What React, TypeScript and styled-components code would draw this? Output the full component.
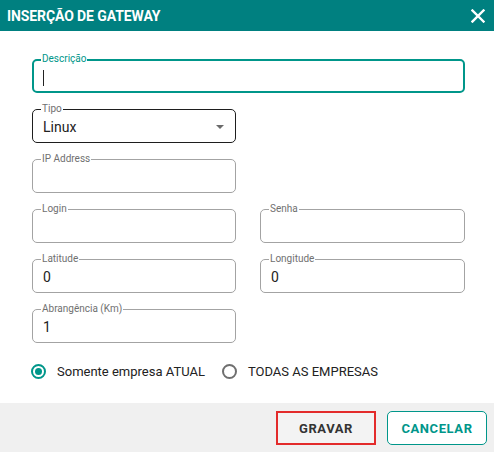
import React from "react";
import styled, { createGlobalStyle } from "styled-components";

const Global = createGlobalStyle`
  html, body { margin: 0; padding: 0; background: #fff; }
  body { font-family: Roboto, "Liberation Sans", Arial, sans-serif; }
  * { box-sizing: border-box; }
`;

const Dialog = styled.div`
  width: 494px;
  height: 452px;
  display: flex;
  flex-direction: column;
  background: #fff;
`;

const Header = styled.div`
  height: 31px;
  background: #008080;
  display: flex;
  align-items: center;
  justify-content: space-between;
  padding: 0 9px 0 7px;
`;

const Title = styled.h1`
  margin: 0;
  color: #fff;
  font-size: 14px;
  font-weight: 700;
  letter-spacing: -0.1px;
`;

const CloseButton = styled.button`
  border: 0;
  background: none;
  padding: 0;
  width: 14px;
  height: 14px;
  display: flex;
  cursor: pointer;
`;

const Body = styled.div`
  flex: 1;
  padding: 28px 29px 0 32px;
`;

const Grid = styled.div`
  display: grid;
  grid-template-columns: 204px 205px;
  column-gap: 24px;
  row-gap: 16px;
`;

const Field = styled.div<{ $wide?: boolean; $col: number }>`
  position: relative;
  height: 34px;
  grid-column: ${(p) => (p.$wide ? "1 / span 2" : `${p.$col}`)};
`;

const Box = styled.div<{ $variant?: "focus" | "active" }>`
  height: 100%;
  border-radius: 5px;
  border: ${(p) =>
    p.$variant === "focus"
      ? "2px solid #00968a"
      : p.$variant === "active"
      ? "1px solid #1e1e1e"
      : "1px solid #a3a3a3"};
  display: flex;
  align-items: center;
  padding: ${(p) => (p.$variant === "focus" ? "0 9px 0 9px" : "0 10px 0 10px")};
  padding-top: 2px;
  font-size: 14px;
  color: #222;
`;

const Label = styled.span<{ $focus?: boolean }>`
  position: absolute;
  top: -5px;
  left: 9px;
  padding: 0 1px;
  background: #fff;
  font-size: 10px;
  line-height: 10px;
  color: ${(p) => (p.$focus ? "#00968a" : "#707070")};
`;

const Caret = styled.span`
  display: block;
  width: 1px;
  height: 16px;
  background: #222;
  margin-top: 2px;
`;

const Value = styled.span`
  flex: 1;
`;

const Arrow = styled.span`
  width: 0;
  height: 0;
  border-left: 4px solid transparent;
  border-right: 4px solid transparent;
  border-top: 4px solid #6a6a6a;
  margin-right: 1px;
`;

const RadioRow = styled.div`
  display: flex;
  align-items: center;
  margin-top: 21px;
  margin-left: -1px;
  height: 15px;
`;

const RadioOption = styled.label`
  display: flex;
  align-items: center;
  font-size: 13px;
  color: #222;
  margin-right: 17px;
  cursor: pointer;
`;

const Circle = styled.span<{ $checked?: boolean }>`
  width: 15px;
  height: 15px;
  border-radius: 50%;
  border: 2px solid ${(p) => (p.$checked ? "#00968a" : "#6f6f6f")};
  display: flex;
  align-items: center;
  justify-content: center;
  margin-right: 11px;
  &::after {
    content: "";
    width: 7px;
    height: 7px;
    border-radius: 50%;
    background: ${(p) => (p.$checked ? "#00968a" : "transparent")};
  }
`;

const Footer = styled.div`
  height: 49px;
  background: #f0f0f0;
  display: flex;
  align-items: center;
  justify-content: flex-end;
  gap: 11px;
  padding: 1px 7px 0 0;
`;

const Button = styled.button<{ $primary?: boolean }>`
  width: 100px;
  height: 34px;
  border-radius: ${(p) => (p.$primary ? "0" : "5px")};
  border: ${(p) => (p.$primary ? "2px solid #e32b2b" : "1px solid #00968a")};
  background: ${(p) => (p.$primary ? "#f3f3f3" : "#fff")};
  color: ${(p) => (p.$primary ? "#333" : "#00968a")};
  font-family: Roboto, "Liberation Sans", Arial, sans-serif;
  font-size: 13px;
  font-weight: 700;
  letter-spacing: 0.6px;
  cursor: pointer;
  padding: 0;
`;

type F = { label: string; value?: string; col: number };

const fields: F[] = [
  { label: "IP Address", col: 1 },
  { label: "Login", col: 1 },
  { label: "Senha", col: 2 },
  { label: "Latitude", value: "0", col: 1 },
  { label: "Longitude", value: "0", col: 2 },
  { label: "Abrangência (Km)", value: "1", col: 1 },
];

export default function App() {
  return (
    <>
      <Global />
      <Dialog>
        <Header>
          <Title>INSERÇÃO DE GATEWAY</Title>
          <CloseButton aria-label="Fechar">
            <svg width="14" height="14" viewBox="0 0 14 14">
              <path d="M1.5 1.5 L12.5 12.5 M12.5 1.5 L1.5 12.5" stroke="#fff" strokeWidth="2.4" strokeLinecap="square" />
            </svg>
          </CloseButton>
        </Header>
        <Body>
          <Grid>
            <Field $wide $col={1}>
              <Box $variant="focus">
                <Caret />
              </Box>
              <Label $focus>Descrição</Label>
            </Field>
            <Field $col={1}>
              <Box $variant="active">
                <Value>Linux</Value>
                <Arrow />
              </Box>
              <Label>Tipo</Label>
            </Field>
            {fields.map((f) => (
              <Field key={f.label} $col={f.col}>
                <Box>
                  <Value>{f.value ?? ""}</Value>
                </Box>
                <Label>{f.label}</Label>
              </Field>
            ))}
          </Grid>
          <RadioRow>
            <RadioOption>
              <Circle $checked />
              Somente empresa ATUAL
            </RadioOption>
            <RadioOption>
              <Circle />
              TODAS AS EMPRESAS
            </RadioOption>
          </RadioRow>
        </Body>
        <Footer>
          <Button $primary>GRAVAR</Button>
          <Button>CANCELAR</Button>
        </Footer>
      </Dialog>
    </>
  );
}
